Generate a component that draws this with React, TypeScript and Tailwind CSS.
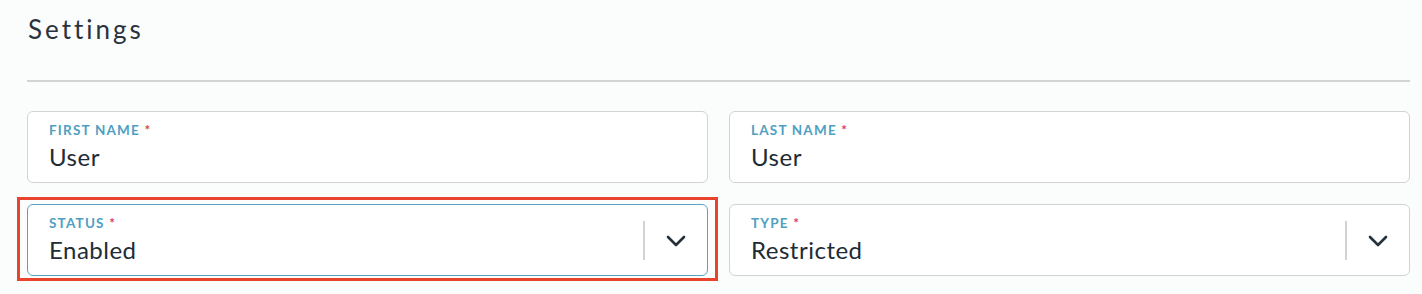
type FieldProps = {
  label: string;
  value: string;
  select?: boolean;
  focused?: boolean;
};

function Chevron() {
  return (
    <svg width="20" height="12" viewBox="0 0 20 12" fill="none" className="text-[#26313b]">
      <path d="M2 2l8 8 8-8" stroke="currentColor" strokeWidth="2.6" strokeLinecap="round" strokeLinejoin="round" />
    </svg>
  );
}

function Field({ label, value, select, focused }: FieldProps) {
  return (
    <div
      className={`flex items-stretch h-[72px] rounded-[6px] border bg-white ${
        focused ? 'border-[#5aa2c4]' : 'border-[#d3d3d3]'
      }`}
    >
      <div className="flex-1 flex flex-col pl-[21px] pt-[9px]">
        <span className="text-[13.5px] leading-[19px] font-bold tracking-[1.2px] text-[#4f9fc3]">
          {label} <span className="text-[#d9454a]">*</span>
        </span>
        <span className="mt-[2px] text-[24px] leading-[30px] tracking-[0.5px] text-[#212b35]">{value}</span>
      </div>
      {select && (
        <div className="flex items-center">
          <div className="w-[2px] h-[39px] bg-[#d2d2d2]" />
          <div className="w-[62px] flex items-center justify-center pt-[1px]">
            <Chevron />
          </div>
        </div>
      )}
    </div>
  );
}

export default function App() {
  return (
    <main className="w-[1422px] h-[294px] bg-[#fbfcfc] pl-[27px] pr-[12px] font-['Lato','Liberation_Sans',sans-serif]">
      <header className="pt-[12px] h-[82px] border-b-2 border-[#d4d4d4]">
        <h1 className="pl-[1px] text-[26px] leading-[34px] font-normal tracking-[3px] text-[#2a333c]">
          Settings
        </h1>
      </header>

      <section className="grid grid-cols-2 gap-x-[21px] gap-y-[21px] pt-[29px]" aria-label="Settings form">
        <Field label="FIRST NAME" value="User" />
        <Field label="LAST NAME" value="User" />
        <div className="relative">
          <Field label="STATUS" value="Enabled" select focused />
          <div className="absolute -left-[10px] -top-[7px] -right-[10px] -bottom-[5px] border-[3px] border-[#e8442d] pointer-events-none" />
        </div>
        <Field label="TYPE" value="Restricted" select />
      </section>
    </main>
  );
}
